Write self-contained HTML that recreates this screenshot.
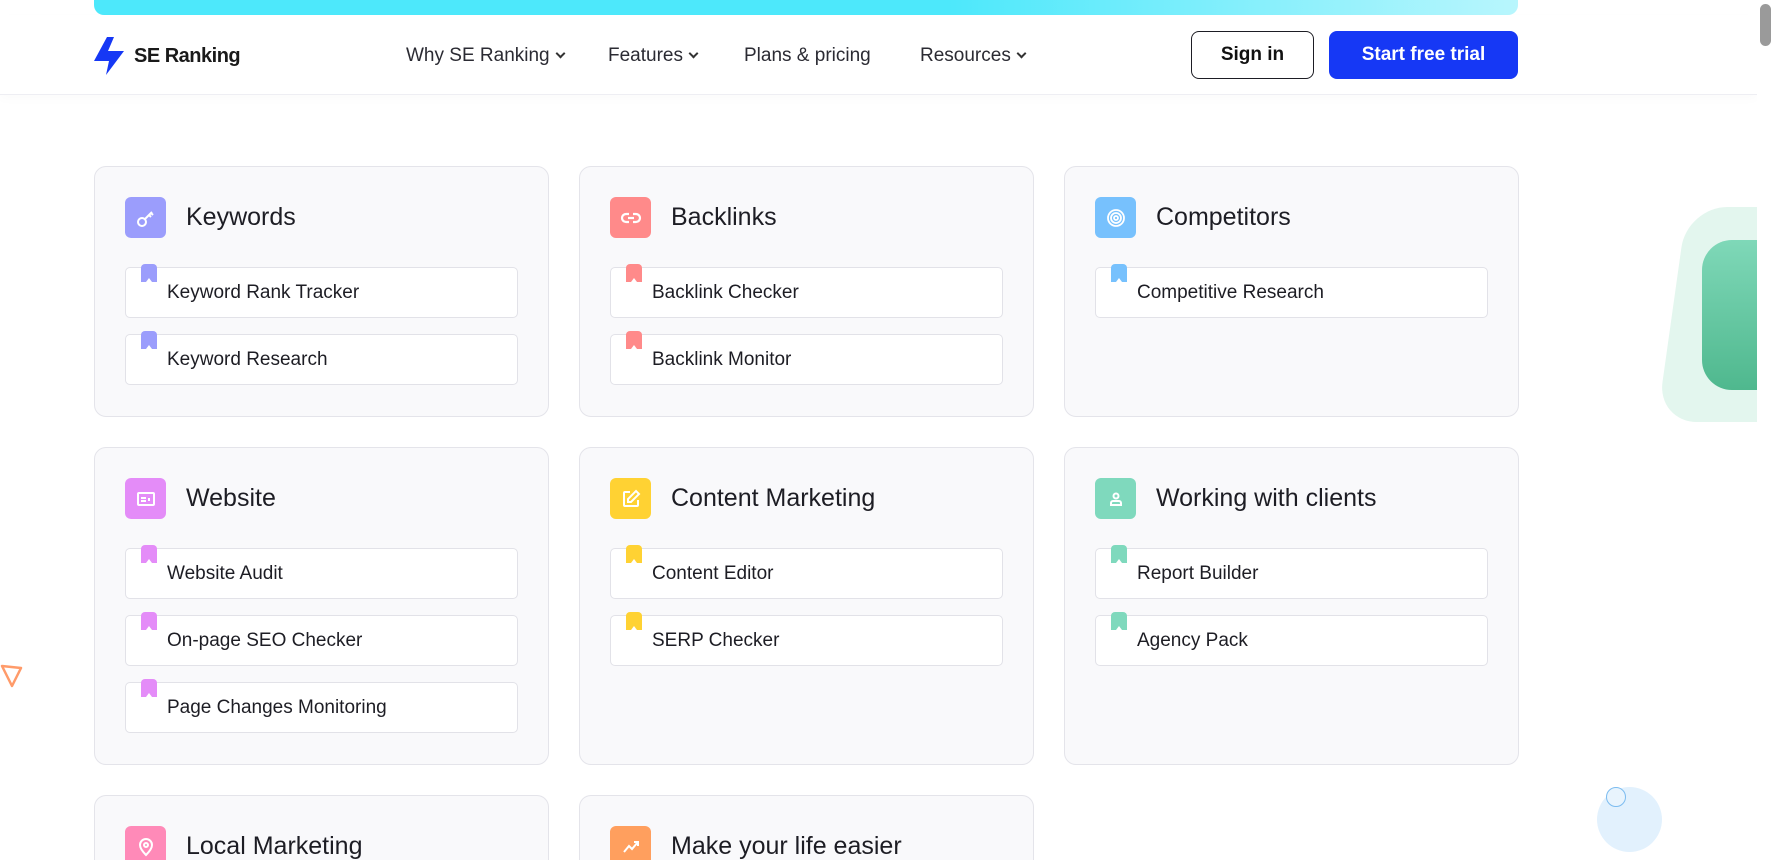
<!DOCTYPE html>
<html><head><meta charset="utf-8"><style>
*{box-sizing:border-box;margin:0;padding:0}
html,body{width:1775px;height:860px;overflow:hidden}
body{background:#fff;font-family:"Liberation Sans",sans-serif;color:#1a1a1a;position:relative}
.topbar{position:absolute;left:94px;top:0;width:1424px;height:15px;border-radius:0 0 10px 10px;background:linear-gradient(90deg,#4de8fb 0%,#4de8fb 60%,#b8f6fd 100%)}
.header{position:absolute;left:0;top:15px;width:1757px;height:80px;border-bottom:1px solid #eeeef3;box-shadow:0 4px 10px rgba(0,0,0,.02)}
.logo{position:absolute;left:94px;top:37px;display:flex;align-items:center;gap:8px;font-weight:bold;font-size:20px;letter-spacing:-0.5px}
.nav{position:absolute;top:45px;font-size:19px;color:#2b2b33}
.nav .c{display:inline-block;width:7px;height:7px;border-right:2px solid #333;border-bottom:2px solid #333;transform:rotate(45deg);margin-left:7px;position:relative;top:-4px}
.btn{position:absolute;top:31px;height:48px;border-radius:8px;font-size:19px;display:flex;align-items:center;justify-content:center;font-weight:bold}
.card{position:absolute;background:#f9f9fb;border:1px solid #e4e4ea;border-radius:12px}
.ic{position:absolute;left:30px;top:30px;width:41px;height:41px;border-radius:6px;display:flex;align-items:center;justify-content:center}
.tt{position:absolute;left:91px;top:36px;font-size:25px;color:#1d1d24}
.it{position:absolute;left:30px;width:393px;height:51px;background:#fff;border:1px solid #e2e2e8;border-radius:5px;font-size:19px;padding:14px 0 0 41px;color:#1d1d24}
.bm{position:absolute;left:15px;top:-4px;width:16px;height:18px;border-radius:4px 4px 0 0}
.notch{position:absolute;left:5px;bottom:0;width:0;height:0;border-left:3px solid transparent;border-right:3px solid transparent;border-bottom:4px solid #fff}
</style></head><body>
<div class="topbar"></div>
<div class="header"></div>
<div class="logo"><svg width="32" height="38" viewBox="0 0 32 38"><path d="M13 0 L20 0 L14 14 L30 14 L12 38 L15 24 L0 24 Z" fill="#1638f5"/></svg><span>SE Ranking</span></div>
<div class="nav" style="left:406px">Why SE Ranking<span class="c"></span></div>
<div class="nav" style="left:608px">Features<span class="c"></span></div>
<div class="nav" style="left:744px">Plans &amp; pricing</div>
<div class="nav" style="left:920px">Resources<span class="c"></span></div>
<div class="btn" style="left:1191px;width:123px;border:1.5px solid #1d1d24;color:#111;font-weight:600">Sign in</div>
<div class="btn" style="left:1329px;width:189px;background:#1638f5;color:#fff">Start free trial</div>

<div style="position:absolute;left:1672px;top:207px;width:110px;height:215px;background:#e3f6ee;border-radius:40px 0 0 40px;transform:skewX(-8deg)"></div>
<div style="position:absolute;left:1702px;top:240px;width:80px;height:150px;background:linear-gradient(180deg,#7fd8b8,#4fb88e);border-radius:30px 0 0 30px"></div>
<div style="position:absolute;left:1757px;top:0;width:18px;height:860px;background:#fff"></div>
<div style="position:absolute;left:1760px;top:4px;width:11px;height:42px;background:#9a9a9a;border-radius:6px"></div>
<svg style="position:absolute;left:0;top:662px" width="24" height="28"><path d="M2 4 L21 6 L12 24 Z" fill="none" stroke="#ff9b6a" stroke-width="2.5" stroke-linejoin="round"/></svg>
<div style="position:absolute;left:1597px;top:787px;width:65px;height:65px;border-radius:50%;background:#e2f1fd"></div>
<div style="position:absolute;left:1606px;top:787px;width:20px;height:20px;border-radius:50%;border:1.5px solid #7cbcf0;background:#e8f4fd"></div>

<div class="card" style="left:94px;top:166px;width:455px;height:251px">
 <div class="ic" style="background:#9b9dfc"><svg width="22" height="22" viewBox="0 0 22 22" fill="none" stroke="#fff" stroke-width="2"><circle cx="7" cy="15" r="4"/><path d="M10 12 L17 5 M14 8 L16 10 M16 6 L18 8"/></svg></div>
 <div class="tt">Keywords</div>
 <div class="it" style="top:100px"><div class="bm" style="background:#9b9dfc"><div class="notch"></div></div>Keyword Rank Tracker</div>
 <div class="it" style="top:167px"><div class="bm" style="background:#9b9dfc"><div class="notch"></div></div>Keyword Research</div>
</div>
<div class="card" style="left:579px;top:166px;width:455px;height:251px">
 <div class="ic" style="background:#ff8a8a"><svg width="22" height="22" viewBox="0 0 22 22" fill="none" stroke="#fff" stroke-width="2.2"><path d="M9 7 H6 a4 4 0 0 0 0 8 H9 M13 7 H16 a4 4 0 0 1 0 8 H13 M8 11 H14"/></svg></div>
 <div class="tt">Backlinks</div>
 <div class="it" style="top:100px"><div class="bm" style="background:#ff8a8a"><div class="notch"></div></div>Backlink Checker</div>
 <div class="it" style="top:167px"><div class="bm" style="background:#ff8a8a"><div class="notch"></div></div>Backlink Monitor</div>
</div>
<div class="card" style="left:1064px;top:166px;width:455px;height:251px">
 <div class="ic" style="background:#77c1fd"><svg width="22" height="22" viewBox="0 0 22 22" fill="none" stroke="#fff" stroke-width="1.8"><circle cx="11" cy="11" r="8"/><circle cx="11" cy="11" r="5"/><circle cx="11" cy="11" r="2"/></svg></div>
 <div class="tt">Competitors</div>
 <div class="it" style="top:100px"><div class="bm" style="background:#77c1fd"><div class="notch"></div></div>Competitive Research</div>
</div>
<div class="card" style="left:94px;top:447px;width:455px;height:318px">
 <div class="ic" style="background:#e48cf8"><svg width="20" height="18" viewBox="0 0 20 18" fill="none" stroke="#fff" stroke-width="2"><rect x="2" y="3" width="16" height="12" rx="1"/><path d="M5 8 H10 M5 11 H10 M13 8 V11"/></svg></div>
 <div class="tt">Website</div>
 <div class="it" style="top:100px"><div class="bm" style="background:#e48cf8"><div class="notch"></div></div>Website Audit</div>
 <div class="it" style="top:167px"><div class="bm" style="background:#e48cf8"><div class="notch"></div></div>On-page SEO Checker</div>
 <div class="it" style="top:234px"><div class="bm" style="background:#e48cf8"><div class="notch"></div></div>Page Changes Monitoring</div>
</div>
<div class="card" style="left:579px;top:447px;width:455px;height:318px">
 <div class="ic" style="background:#ffd233"><svg width="22" height="22" viewBox="0 0 22 22" fill="none" stroke="#fff" stroke-width="2"><path d="M10 4 H5 a1 1 0 0 0 -1 1 V17 a1 1 0 0 0 1 1 H17 a1 1 0 0 0 1 -1 V12 M16 3 L19 6 L11 14 H8 V11 Z"/></svg></div>
 <div class="tt">Content Marketing</div>
 <div class="it" style="top:100px"><div class="bm" style="background:#ffd233"><div class="notch"></div></div>Content Editor</div>
 <div class="it" style="top:167px"><div class="bm" style="background:#ffd233"><div class="notch"></div></div>SERP Checker</div>
</div>
<div class="card" style="left:1064px;top:447px;width:455px;height:318px">
 <div class="ic" style="background:#7fd9bd"><svg width="20" height="20" viewBox="0 0 20 20" fill="none" stroke="#fff" stroke-width="2"><circle cx="10" cy="7" r="2.5"/><path d="M5 16 V14 a2 2 0 0 1 2 -2 H13 a2 2 0 0 1 2 2 V16 Z"/></svg></div>
 <div class="tt">Working with clients</div>
 <div class="it" style="top:100px"><div class="bm" style="background:#7fd9bd"><div class="notch"></div></div>Report Builder</div>
 <div class="it" style="top:167px"><div class="bm" style="background:#7fd9bd"><div class="notch"></div></div>Agency Pack</div>
</div>
<div class="card" style="left:94px;top:795px;width:455px;height:65px;border-bottom:none;border-radius:12px 12px 0 0">
 <div class="ic" style="background:#ff8ab8"><svg width="18" height="20" viewBox="0 0 18 20" fill="none" stroke="#fff" stroke-width="2"><path d="M9 18 C4 13 3 10 3 8 a6 6 0 0 1 12 0 c0 2 -1 5 -6 10 Z"/><circle cx="9" cy="8" r="2"/></svg></div>
 <div class="tt">Local Marketing</div>
</div>
<div class="card" style="left:579px;top:795px;width:455px;height:65px;border-bottom:none;border-radius:12px 12px 0 0">
 <div class="ic" style="background:#ff9f5e"><svg width="20" height="20" viewBox="0 0 20 20" fill="none" stroke="#fff" stroke-width="2"><path d="M3 15 L8 9 L11 12 L17 5 M13 5 H17 V9"/></svg></div>
 <div class="tt">Make your life easier</div>
</div>
</body></html>
